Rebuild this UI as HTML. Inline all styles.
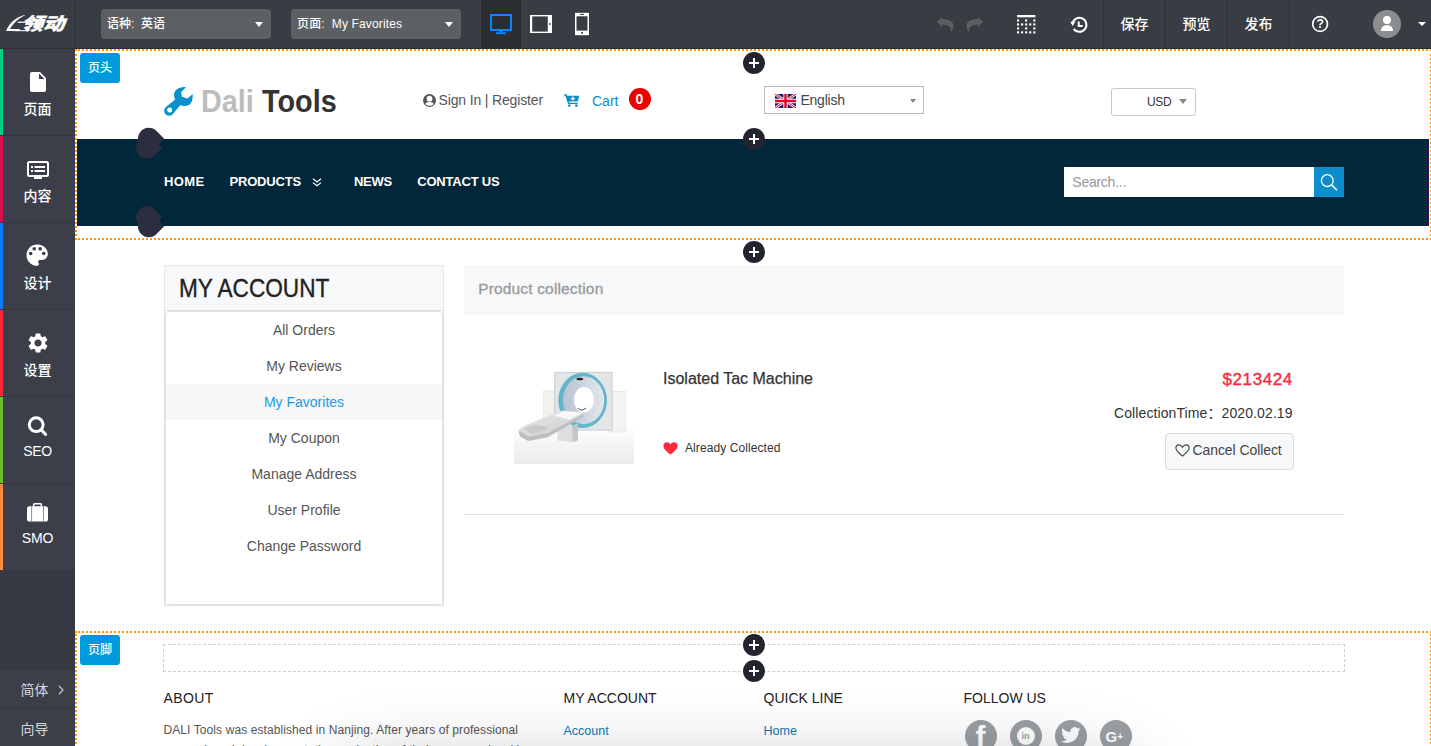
<!DOCTYPE html>
<html lang="zh-CN">
<head>
<meta charset="utf-8">
<title>My Favorites - Dali Tools</title>
<style>
*{box-sizing:border-box;margin:0;padding:0}
html,body{width:1431px;height:746px;overflow:hidden;background:#fff}
body{font-family:"Liberation Sans","Noto Sans CJK SC",sans-serif;font-size:14px;color:#333;position:relative}
.abs{position:absolute}
.t{position:absolute;white-space:nowrap;line-height:1}
svg{display:block;position:absolute;overflow:visible}

/* ---------- top bar ---------- */
#topbar{position:absolute;left:0;top:0;width:1431px;height:49px;background:#383c43;border-bottom:1px solid #2b2e33}
#topbar .vd{position:absolute;top:0;width:1px;height:48px;background:#2c2f34}
.sel{position:absolute;top:9px;width:170px;height:30px;background:#5c6063;border-radius:4px;color:#fff;font-size:12px}
.sel .t{left:6px;top:9px;font-size:12px;color:#fff;font-weight:500}
.caret{position:absolute;width:0;height:0;border-left:4.5px solid transparent;border-right:4.5px solid transparent;border-top:5px solid #fff}
.tbtn{position:absolute;top:0;height:48px;color:#fff;font-size:14px;font-weight:500;line-height:48px;text-align:center}

/* ---------- side bar ---------- */
#side{position:absolute;left:0;top:49px;width:75px;height:697px;background:#3c3f4a}
.si{position:absolute;left:0;width:75px;height:87px;border-bottom:1px solid #343741}
.si i{position:absolute;left:0;top:0;width:3px;height:86px}
.si svg,.si .lb{margin-top:-1px}
.si .lb{position:absolute;left:0;width:75px;text-align:center;color:#fff;font-size:14px;font-weight:500;line-height:16px;top:53px}
.si .lb.en{font-size:14px;font-weight:400;top:54px}

/* ---------- editor canvas ---------- */
.badge{position:absolute;width:40px;height:30px;background:#0099dd;border-radius:3px;color:#fff;font-size:12px;line-height:30px;text-align:center;font-weight:500}
.plus{position:absolute;width:22px;height:22px;border-radius:50%;background:#22242f}
.plus:before{content:"";position:absolute;left:6px;top:10px;width:10px;height:2px;background:#fff}
.plus:after{content:"";position:absolute;left:10px;top:6px;width:2px;height:10px;background:#fff}
.dotc{position:absolute;width:2px;height:2px;background:#ff9800}
.doth{position:absolute;height:2px;background:repeating-linear-gradient(90deg,#ff9800 0 2px,transparent 2px 4px)}
.dotv{position:absolute;width:2px;background:repeating-linear-gradient(180deg,#ff9800 0 2px,transparent 2px 4px)}

/* ---------- site ---------- */
#canvas{position:absolute;left:75px;top:49px;width:1356px;height:697px;background:#fff;overflow:hidden}
#canvas .in{position:absolute;left:-75px;top:-49px;width:1431px;height:746px} /* page coordinates */
.nav{position:absolute;left:77px;top:139px;width:1352px;height:87px;background:#02273a}
.nv{color:#fff;font-size:13px;font-weight:700;top:175px}
.c5{color:#555}

.mi{position:absolute;left:166px;width:276px;height:36px;line-height:36px;text-align:center;font-size:14px;color:#555}
.ft-h{font-size:14px;color:#222;top:691px}
.ft-l{font-size:12.5px;color:#0b7ab8}
.soc{top:720px;width:32px;height:32px;border-radius:50%;background:#9a9fa4}
</style>
</head>
<body>

<!-- ================= TOP BAR ================= -->
<div id="topbar">
  <!-- logo -->
  <svg width="75" height="48" viewBox="0 0 75 48" style="left:0;top:0">
    <path d="M6 31 C10 22 17 16 26 15 C18 18 13 24 10 29 L20 29 L19 31 Z" fill="#fff"/>
    <path d="M18 21.5 h13 l-.5 1.5 h-13z M15 30 h14 l-.4 1.2 h-14z" fill="#fff" opacity=".85"/>
    <text x="22" y="29.8" font-family="'Liberation Sans','Noto Sans CJK SC',sans-serif" font-size="17.5" font-weight="900" fill="#fff" stroke="#fff" stroke-width=".4" transform="translate(10 0) skewX(-20)" textLength="43" lengthAdjust="spacingAndGlyphs">领动</text>
  </svg>
  <div class="vd" style="left:75px"></div>

  <div class="sel" style="left:101px"><span class="t">语种:&nbsp; 英语</span><span class="caret" style="left:154px;top:13px"></span></div>
  <div class="sel" style="left:291px"><span class="t" style="letter-spacing:.15px">页面:&nbsp; My Favorites</span><span class="caret" style="left:154px;top:13px"></span></div>

  <!-- device icons -->
  <div class="abs" style="left:481px;top:0;width:40px;height:48px;background:#2a2e31"></div>
  <svg width="24" height="24" viewBox="0 0 24 24" style="left:489px;top:12px">
    <rect x="2" y="3" width="20" height="15" fill="none" stroke="#0a84ff" stroke-width="2"/>
    <rect x="10.5" y="19" width="3" height="2" fill="#0a84ff"/><rect x="7" y="20.3" width="10" height="1.9" fill="#0a84ff"/>
  </svg>
  <svg width="24" height="20" viewBox="0 0 24 20" style="left:529px;top:14px">
    <rect x="1" y="1" width="22" height="18" fill="#fff"/><rect x="3.2" y="2.4" width="15.6" height="15.2" fill="#383c43"/><rect x="20" y="9.2" width="1.6" height="1.6" fill="#383c43"/>
  </svg>
  <svg width="16" height="24" viewBox="0 0 16 24" style="left:574px;top:12px">
    <rect x="1" y="0.8" width="14" height="22.4" fill="#fff"/><rect x="2.5" y="4.3" width="11" height="14.3" fill="#383c43"/><rect x="6" y="1.9" width="4" height="1" fill="#383c43"/><rect x="7.2" y="20" width="1.7" height="1.7" fill="#383c43"/>
  </svg>

  <!-- undo / redo -->
  <svg width="75" height="34" viewBox="0 0 1431 649" style="left:925px;top:8px" fill="#5e5f60">
    <path id="undoP" d="M225 265 L330 165 L330 215 C430 215 542 240 542 340 C542 380 527 420 512 442 L495 442 C497 380 470 315 330 315 L330 365 Z"/>
    <path d="M225 265 L330 165 L330 215 C430 215 542 240 542 340 C542 380 527 420 512 442 L495 442 C497 380 470 315 330 315 L330 365 Z" transform="translate(1335 0) scale(-1 1)"/>
  </svg>

  <!-- grid icon -->
  <svg width="19" height="19" viewBox="0 0 19 19" style="left:1016.8px;top:14.6px" fill="#fff">
    <rect x="0" y="0" width="18.4" height="2.3"/><rect x="0" y="4.4" width="2.1" height="2.1"/><rect x="8.14" y="4.4" width="2.1" height="2.1"/><rect x="16.3" y="4.4" width="2.1" height="2.1"/><rect x="0" y="8.4" width="2.1" height="2.1"/><rect x="4.07" y="8.4" width="2.1" height="2.1"/><rect x="8.14" y="8.4" width="2.1" height="2.1"/><rect x="12.2" y="8.4" width="2.1" height="2.1"/><rect x="16.3" y="8.4" width="2.1" height="2.1"/><rect x="0" y="12.4" width="2.1" height="2.1"/><rect x="8.14" y="12.4" width="2.1" height="2.1"/><rect x="16.3" y="12.4" width="2.1" height="2.1"/><rect x="0" y="16.3" width="2.1" height="2.1"/><rect x="4.07" y="16.3" width="2.1" height="2.1"/><rect x="8.14" y="16.3" width="2.1" height="2.1"/><rect x="12.2" y="16.3" width="2.1" height="2.1"/><rect x="16.3" y="16.3" width="2.1" height="2.1"/>
  </svg>

  <!-- history icon -->
  <svg width="22" height="22" viewBox="0 0 22 22" style="left:1068px;top:14px" fill="#fff">
    <path d="M4.4 10.2 A7 7 0 1 1 5.7 14.9" fill="none" stroke="#fff" stroke-width="2"/>
    <path d="M2.3 7.7 H7.5 L4.7 12z"/>
    <path d="M9.7 7.6 h2 v3.3 h3 v2 h-5z"/>
  </svg>

  <div class="vd" style="left:1103px"></div>
  <div class="tbtn" style="left:1104px;width:61px">保存</div>
  <div class="vd" style="left:1165px"></div>
  <div class="tbtn" style="left:1166px;width:61px">预览</div>
  <div class="vd" style="left:1227px"></div>
  <div class="tbtn" style="left:1228px;width:61px">发布</div>
  <div class="vd" style="left:1289px"></div>

  <!-- help -->
  <svg width="20" height="20" viewBox="0 0 20 20" style="left:1310px;top:14px"><circle cx="10.1" cy="10" r="7.4" fill="none" stroke="#fff" stroke-width="1.7"/></svg>
  <span class="t" style="left:1316.6px;top:18.3px;font-size:12px;font-weight:700;color:#fff">?</span>

  <!-- avatar -->
  <div class="abs" style="left:1373px;top:10px;width:28px;height:28px;border-radius:50%;background:#8b8e90;overflow:hidden">
    <div class="abs" style="left:10px;top:6px;width:8px;height:8px;border-radius:50%;background:#fff"></div>
    <div class="abs" style="left:7.7px;top:15.3px;width:12.6px;height:5.4px;border-radius:6.3px 6.3px 0 0/5.4px 5.4px 0 0;background:#fff"></div>
  </div>
  <span class="caret" style="left:1418px;top:22px;border-left-width:4px;border-right-width:4px;border-top-width:4.5px"></span>
</div>

<!-- ================= SIDE BAR ================= -->
<div id="side">
  <!-- coordinates inside #side are page-y minus 49 -->
  <div class="si" style="top:0px"><i style="background:#00d084"></i>
    <svg width="24" height="24" viewBox="0 0 24 24" style="left:26px;top:22px"><path fill="#fff" d="M6 2c-1.1 0-1.99.9-1.99 2L4 20c0 1.1.89 2 1.99 2H18c1.1 0 2-.9 2-2V8l-6-6H6zm7 7V3.5L18.5 9H13z"/></svg>
    <div class="lb">页面</div></div>
  <div class="si" style="top:87px"><i style="background:#d6104f"></i>
    <svg width="24" height="20" viewBox="0 0 24 20" style="left:26px;top:25px">
      <rect x="2" y="2" width="20" height="14" rx="1.5" fill="none" stroke="#fff" stroke-width="2"/><rect x="8" y="16.5" width="8" height="2.5" fill="#fff"/>
      <rect x="5" y="6" width="2" height="2" fill="#fff"/><rect x="8.5" y="6" width="10.5" height="2" fill="#fff"/>
      <rect x="5" y="10" width="2" height="2" fill="#fff"/><rect x="8.5" y="10" width="10.5" height="2" fill="#fff"/>
    </svg>
    <div class="lb">内容</div></div>
  <div class="si" style="top:174px"><i style="background:#0a7cf5"></i>
    <svg width="28.4" height="28.4" viewBox="0 0 24 24" style="left:23.4px;top:19.2px"><path fill="#fff" d="M12 3c-4.97 0-9 4.03-9 9s4.03 9 9 9c.83 0 1.5-.67 1.5-1.5 0-.39-.15-.74-.39-1.01-.23-.26-.38-.61-.38-.99 0-.83.67-1.5 1.5-1.5H16c2.76 0 5-2.24 5-5 0-4.42-4.03-8-9-8zm-5.5 9c-.83 0-1.5-.67-1.5-1.5S5.67 9 6.5 9 8 9.67 8 10.5 7.33 12 6.5 12zm3-4C8.67 8 8 7.33 8 6.5S8.67 5 9.5 5s1.5.67 1.5 1.5S10.33 8 9.5 8zm5 0c-.83 0-1.5-.67-1.5-1.5S13.67 5 14.5 5s1.5.67 1.5 1.5S15.33 8 14.5 8zm3 4c-.83 0-1.5-.67-1.5-1.5S16.67 9 17.5 9s1.5.67 1.5 1.5-.67 1.5-1.5 1.5z"/></svg>
    <div class="lb">设计</div></div>
  <div class="si" style="top:261px"><i style="background:#f5283c"></i>
    <svg width="24" height="24" viewBox="0 0 24 24" style="left:26px;top:22px"><path fill="#fff" d="M19.14 12.94c.04-.3.06-.61.06-.94 0-.32-.02-.64-.07-.94l2.03-1.58c.18-.14.23-.41.12-.61l-1.92-3.32c-.12-.22-.37-.29-.59-.22l-2.39.96c-.5-.38-1.03-.7-1.62-.94l-.36-2.54c-.04-.24-.24-.41-.48-.41h-3.84c-.24 0-.43.17-.47.41l-.36 2.54c-.59.24-1.13.57-1.62.94l-2.39-.96c-.22-.08-.47 0-.59.22L2.74 8.87c-.12.21-.08.47.12.61l2.03 1.58c-.05.3-.09.63-.09.94s.02.64.07.94l-2.03 1.58c-.18.14-.23.41-.12.61l1.92 3.32c.12.22.37.29.59.22l2.39-.96c.5.38 1.03.7 1.62.94l.36 2.54c.05.24.24.41.48.41h3.84c.24 0 .44-.17.47-.41l.36-2.54c.59-.24 1.13-.56 1.62-.94l2.39.96c.22.08.47 0 .59-.22l1.92-3.32c.12-.22.07-.47-.12-.61l-2.01-1.58zM12 15.6c-1.98 0-3.6-1.62-3.6-3.6s1.62-3.6 3.6-3.6 3.6 1.62 3.6 3.6-1.62 3.6-3.6 3.6z"/></svg>
    <div class="lb">设置</div></div>
  <div class="si" style="top:348px"><i style="background:#6cc02c"></i>
    <svg width="24" height="24" viewBox="0 0 24 24" style="left:26px;top:19px"><circle cx="10.2" cy="9.7" r="6.9" fill="none" stroke="#fff" stroke-width="3"/><path d="M15.4 15 L19.6 19.4" stroke="#fff" stroke-width="3" stroke-linecap="round"/></svg>
    <div class="lb en" style="top:47px;letter-spacing:-.3px">SEO</div></div>
  <div class="si" style="top:435px"><i style="background:#ff8a3c"></i>
    <svg width="24" height="22" viewBox="0 0 24 22" style="left:26px;top:18px">
      <rect x="1" y="5.3" width="21" height="15.3" rx="2.6" fill="#fff"/>
      <rect x="5.1" y="5.3" width="1" height="15.3" fill="#8b8e96"/><rect x="17" y="5.3" width="1" height="15.3" fill="#8b8e96"/>
      <path d="M7.7 5.3 V3.6 a0.8 0.8 0 0 1 .8 -.8 h6 a0.8 0.8 0 0 1 .8 .8 V5.3" fill="none" stroke="#fff" stroke-width="1.6"/>
    </svg>
    <div class="lb en" style="top:47px;letter-spacing:-.2px">SMO</div></div>
  <div class="abs" style="left:0;top:521px;width:75px;height:100px;background:#363944"></div>
  <div class="abs" style="left:0;top:621px;width:75px;height:39px;border-bottom:1px solid #343741"></div>
  <span class="t" style="left:20.5px;top:632.5px;font-size:14px;line-height:16px;color:#d6d7d9">简体</span>
  <svg width="6" height="10" viewBox="0 0 6 10" style="left:57.5px;top:635.5px"><path d="M1 1 L5 5 L1 9" fill="none" stroke="#c8c9cc" stroke-width="1.2"/></svg>
  <span class="t" style="left:20.5px;top:671.5px;font-size:14px;line-height:16px;color:#d6d7d9">向导</span>
</div>

<!-- ================= CANVAS ================= -->
<div id="canvas"><div class="in">
  <!-- editor frame : header -->
  <div class="dotc" style="left:75px;top:49px"></div><div class="dotc" style="left:75px;top:238px"></div>
  <div class="doth" style="left:78px;top:49px;width:1353px"></div>
  <div class="doth" style="left:78px;top:238px;width:1353px"></div>
  <div class="dotv" style="left:75px;top:54px;height:184px"></div>
  <div class="dotv" style="left:1430px;top:54px;height:184px"></div>

  <!-- site header -->
  <svg width="40" height="38" viewBox="0 0 785 746" style="left:160px;top:82px"><path fill="#0992cb" fill-rule="evenodd" d="M510 100 C440 95 330 120 290 190 C265 240 270 300 300 345 L120 488 A98 98 0 1 0 262 618 L400 450 C440 480 520 480 570 450 C620 420 650 340 640 235 L540 325 L430 290 L415 200 Z M190 500 a50 50 0 1 0 .1 0z"/></svg>
  <span class="t" id="logoA" style="left:201px;top:84.5px;font-size:32px;font-weight:700;color:#bdbdbd;transform-origin:0 0;transform:scaleX(.9)">Dali</span>
  <span class="t" id="logoB" style="left:261.5px;top:84.5px;font-size:32px;font-weight:700;color:#333;transform-origin:0 0;transform:scaleX(.9)">Tools</span>

  <svg width="13" height="13" viewBox="0 0 13 13" style="left:422.5px;top:93.8px"><defs><clipPath id="uc"><circle cx="6.5" cy="6.5" r="5.2"/></clipPath></defs><circle cx="6.5" cy="6.5" r="6.5" fill="#555"/><circle cx="6.5" cy="4.7" r="2.9" fill="#fff"/><ellipse cx="6.5" cy="10.8" rx="4.3" ry="2.8" fill="#fff" clip-path="url(#uc)"/></svg>
  <span class="t c5" id="sign" style="left:438.5px;top:93px;font-size:14px;letter-spacing:-.15px">Sign In | Register</span>
  <svg width="16" height="13" viewBox="0 0 16 13" style="left:563.5px;top:94px" fill="#0b8ecb">
    <path d="M0 0.2 h2.6 l.7 1.6 h12 l-1.6 5.8 h-9 l.4 1.1 h8.6 v1.3 h-9.6 l-2.8 -8.5 h-1.3z"/>
    <circle cx="5.3" cy="11.6" r="1.3"/><circle cx="12.3" cy="11.6" r="1.3"/>
    <path d="M8.2 2.6 h1.3 v1.4 h1.5 v1.2 h-1.5 v1.4 h-1.3 v-1.4 h-1.5 v-1.2 h1.5z" fill="#fff"/>
  </svg>
  <span class="t" id="cart" style="left:592px;top:93.5px;font-size:14px;color:#0b8ecb">Cart</span>
  <div class="abs" style="left:629px;top:88px;width:22px;height:22px;border-radius:50%;background:#ec0000"></div>
  <span class="t" style="left:635.6px;top:91.5px;font-size:14px;font-weight:700;color:#fff">0</span>

  <div class="abs" style="left:764px;top:86px;width:160px;height:28px;border:1px solid #bcbcbc;background:#fff"></div>
  <svg width="21" height="14" viewBox="0 0 60 36" style="left:775px;top:94px;overflow:hidden" preserveAspectRatio="none">
    <rect width="60" height="36" fill="#1b1f73"/>
    <path d="M0 0 L60 36 M60 0 L0 36" stroke="#fff" stroke-width="7"/>
    <path d="M0 0 L60 36 M60 0 L0 36" stroke="#e4002b" stroke-width="2.6"/>
    <path d="M30 0 V36 M0 18 H60" stroke="#fff" stroke-width="12"/>
    <path d="M30 0 V36 M0 18 H60" stroke="#e4002b" stroke-width="7"/>
  </svg>
  <span class="t c5" id="eng" style="left:800.5px;top:93px;font-size:14px;color:#444;letter-spacing:-.25px">English</span>
  <span class="caret" style="left:909.5px;top:98.5px;border-left-width:3.5px;border-right-width:3.5px;border-top:4px solid #888"></span>

  <div class="abs" style="left:1111px;top:88px;width:85px;height:28px;border:1px solid #c8c8c8;border-radius:3px;background:#fff"></div>
  <span class="t" id="usd" style="left:1147px;top:95.5px;font-size:12px;color:#333;letter-spacing:-.3px">USD</span>
  <span class="caret" style="left:1178.5px;top:99px;border-left-width:4.5px;border-right-width:4.5px;border-top:5px solid #888"></span>

  <!-- nav -->
  <div class="nav"></div>
  <span class="t nv" id="n1" style="left:164px;letter-spacing:.35px">HOME</span>
  <span class="t nv" id="n2" style="left:229.5px;letter-spacing:-.2px">PRODUCTS</span>
  <svg width="10" height="9" viewBox="0 0 10 9" style="left:312.3px;top:178.3px"><path d="M1 0.8 L5 4 L9 0.8 M1 4.6 L5 7.8 L9 4.6" fill="none" stroke="#fff" stroke-width="1.2"/></svg>
  <span class="t nv" id="n3" style="left:354px;letter-spacing:-.3px">NEWS</span>
  <span class="t nv" id="n4" style="left:417.2px;letter-spacing:-.2px">CONTACT US</span>
  <div class="abs" style="left:1064px;top:167px;width:250px;height:30px;background:#fff"></div>
  <span class="t" id="srch" style="left:1072.3px;top:174.5px;font-size:14px;color:#999;letter-spacing:-.25px">Search...</span>
  <div class="abs" style="left:1314px;top:167px;width:30px;height:30px;background:#0b8ecb"></div>
  <svg width="20" height="20" viewBox="0 0 20 20" style="left:1319px;top:172px"><circle cx="8.3" cy="8.6" r="5.9" fill="none" stroke="#fff" stroke-width="1.3"/><path d="M12.6 12.9 L17.5 17.8" stroke="#fff" stroke-width="1.5" stroke-linecap="round"/></svg>

  <!-- drag handles (teardrops) -->
  <svg width="32" height="34" viewBox="0 0 32 34" style="left:134px;top:126px" fill="#2b2d40">
    <path d="M14.8 1.8 a10.9 10.9 0 0 1 7.7 3.2 L30.2 12.7 L22.5 20.4 a10.9 10.9 0 1 1 -7.7 -18.6z"/>
    <path d="M13 10.9 a10.9 10.9 0 0 1 7.7 3.2 L28.4 21.8 L20.7 29.5 a10.9 10.9 0 1 1 -7.7 -18.6z"/>
  </svg>
  <svg width="32" height="34" viewBox="0 0 32 34" style="left:134px;top:205px" fill="#2b2d40"><g transform="translate(0 34) scale(1 -1)">
    <path d="M14.8 1.8 a10.9 10.9 0 0 1 7.7 3.2 L30.2 12.7 L22.5 20.4 a10.9 10.9 0 1 1 -7.7 -18.6z"/>
    <path d="M13 10.9 a10.9 10.9 0 0 1 7.7 3.2 L28.4 21.8 L20.7 29.5 a10.9 10.9 0 1 1 -7.7 -18.6z"/></g>
  </svg>


  <!-- ===== main : left menu ===== -->
  <div class="abs" style="left:164px;top:265px;width:280px;height:46px;background:#f7f8fa;border:1px solid #e6e7e9"></div>
  <span class="t" id="myacc" style="left:179px;top:275.5px;font-size:25px;color:#222;-webkit-text-stroke:.35px #222;transform-origin:0 0;transform:scaleX(.904)">MY ACCOUNT</span>
  <div class="abs" style="left:164px;top:310px;width:280px;height:296px;background:#fff;border:1px solid #dedede"></div>
  <div class="abs" style="left:165px;top:311px;width:278px;height:294px;border:1px solid #e3e3e3;border-radius:4px"></div>
  <div class="mi" style="top:312px"><span id="m1">All Orders</span></div>
  <div class="mi" style="top:348px"><span id="m2">My Reviews</span></div>
  <div class="mi" style="top:384px;background:#f7f7f7;color:#1a9be6"><span id="m3">My Favorites</span></div>
  <div class="mi" style="top:420px"><span id="m4">My Coupon</span></div>
  <div class="mi" style="top:456px"><span id="m5">Manage Address</span></div>
  <div class="mi" style="top:492px"><span id="m6">User Profile</span></div>
  <div class="mi" style="top:528px"><span id="m7">Change Password</span></div>

  <!-- ===== main : product collection ===== -->
  <div class="abs" style="left:464px;top:265px;width:880px;height:50px;background:#f7f8fa"></div>
  <span class="t" id="pc" style="left:478.2px;top:281px;font-size:15.5px;color:#999;letter-spacing:.16px;-webkit-text-stroke:.3px #999">Product collection</span>

  <svg id="ct" width="120" height="120" viewBox="0 0 120 120" style="left:514px;top:344px">
    <defs>
      <linearGradient id="flo" x1="0" y1="0" x2="0" y2="1"><stop offset="0" stop-color="#ffffff"/><stop offset=".68" stop-color="#ffffff"/><stop offset=".82" stop-color="#f6f6f6"/><stop offset="1" stop-color="#eaeaea"/></linearGradient>
      <linearGradient id="tbl" x1="0" y1="0" x2="1" y2="1"><stop offset="0" stop-color="#e9e9e9"/><stop offset="1" stop-color="#cbcccd"/></linearGradient>
      <linearGradient id="cone" x1="0" y1="0" x2="1" y2="0"><stop offset="0" stop-color="#b9c2d0"/><stop offset=".6" stop-color="#d3d9e3"/><stop offset="1" stop-color="#e3e7ee"/></linearGradient>
    </defs>
    <rect width="120" height="120" fill="url(#flo)"/>
    <rect x="29.6" y="47" width="11.5" height="27.8" fill="#f0f2ee" stroke="#dcdfd9" stroke-width=".6"/>
    <rect x="94.9" y="47.6" width="16.5" height="40.4" fill="#f2f4f1" stroke="#dcdfd9" stroke-width=".6"/>
    <rect x="40.8" y="28.3" width="57.3" height="57.8" fill="#e3e5e8" stroke="#bfc3c8" stroke-width=".8"/>
    <ellipse cx="68.6" cy="56.4" rx="23.9" ry="27.2" fill="#62b6cb" stroke="#4fa3ba" stroke-width=".6"/>
    <ellipse cx="69.6" cy="56.2" rx="20.6" ry="24" fill="url(#cone)"/>
    <ellipse cx="69.9" cy="55.7" rx="10" ry="12.7" fill="#ffffff"/>
    <ellipse cx="65.8" cy="35" rx="3.4" ry="1.3" fill="#26282a"/>
    <path d="M64 64 q3 4 8 0" fill="none" stroke="#2d3033" stroke-width=".9"/>
    <polygon points="43.3,78.6 58.3,81.4 58.3,98.3 43.3,96.4" fill="#dcdedf"/>
    <polygon points="58.3,81.4 63.9,79.5 63.9,96.4 58.3,98.3" fill="#c4c6c8"/>
    <polygon points="4.8,86.1 14.2,92.1 33.9,88.4 69.5,69.6 69.5,72.6 33.9,93.2 14.2,97.0 6.3,92.7 4.8,88.9" fill="#bcbec0"/>
    <polygon points="4.8,86.1 9.5,82.0 47.9,66.6 69.5,68.5 69.5,70.0 33.9,88.9 14.2,92.7" fill="url(#tbl)"/>
    <polygon points="39.5,71.5 50.8,67.0 68.6,68.8 55.8,75.6" fill="#f8f8f8"/>
    <polygon points="9.5,84.2 18.9,80.9 33.9,82.7 32.0,86.1 17.0,89.9" fill="#c9cacb"/>
  </svg>

  <span class="t" id="ptitle" style="left:663px;top:371px;font-size:16px;color:#333;-webkit-text-stroke:.25px #333">Isolated Tac Machine</span>
  <svg width="15" height="13" viewBox="0 0 15 13" style="left:663px;top:441.5px"><path d="M7.5 12.5 C6 11 .4 7.5 .4 3.9 C.4 1.6 2 .3 3.9 .3 C5.4 .3 6.7 1.2 7.5 2.5 C8.3 1.2 9.6 .3 11.1 .3 C13 .3 14.6 1.6 14.6 3.9 C14.6 7.5 9 11 7.5 12.5z" fill="#fb2a3c"/></svg>
  <span class="t" id="already" style="left:685px;top:442px;font-size:12px;color:#333;letter-spacing:.08px">Already Collected</span>

  <span class="t" id="price" style="left:1222.5px;top:370.5px;font-size:17px;color:#fa2a3c;letter-spacing:.6px;-webkit-text-stroke:.4px #fa2a3c">$213424</span>
  <span class="t" id="ctime" style="left:1114px;top:404.5px;font-size:14px;color:#333;letter-spacing:.1px">CollectionTime<span style="font-family:'Noto Sans CJK SC',sans-serif">：</span>2020.02.19</span>
  <div class="abs" style="left:1165px;top:433px;width:129px;height:37px;border:1px solid #dcdcdc;border-radius:4px;background:#f7f8fa"></div>
  <svg width="15" height="13" viewBox="0 0 15 13" style="left:1174.5px;top:444px"><path d="M7.5 12 C6 10.6 .9 7.3 .9 4 C.9 2 2.3 .9 3.9 .9 C5.4 .9 6.7 1.9 7.5 3.3 C8.3 1.9 9.6 .9 11.1 .9 C12.7 .9 14.1 2 14.1 4 C14.1 7.3 9 10.6 7.5 12z" fill="none" stroke="#444" stroke-width="1.1"/></svg>
  <span class="t" id="cancel" style="left:1192.5px;top:443px;font-size:14px;color:#444;letter-spacing:-.08px">Cancel Collect</span>
  <div class="abs" style="left:464px;top:514px;width:880px;height:1px;background:#dddddd"></div>

  <!-- ===== footer ===== -->
  <div class="dotc" style="left:75px;top:631px"></div>
  <div class="doth" style="left:78px;top:631px;width:1353px"></div>
  <div class="dotv" style="left:75px;top:634px;height:112px"></div>
  <div class="dotv" style="left:1430px;top:634px;height:112px"></div>
  <div class="abs" style="left:163px;top:644px;width:1182px;height:28px;border:1px dashed #cfcfcf"></div>
  <div class="badge" style="left:80px;top:635px">页脚</div>
  <div class="plus" style="left:743px;top:634px"></div>
  <div class="plus" style="left:743px;top:660px"></div>

  <span class="t ft-h" id="f1" style="left:163.5px;letter-spacing:.4px">ABOUT</span>
  <span class="t ft-h" id="f2" style="left:563.5px">MY ACCOUNT</span>
  <span class="t ft-h" id="f3" style="left:763.5px">QUICK LINE</span>
  <span class="t ft-h" id="f4" style="left:963.5px">FOLLOW US</span>
  <span class="t" id="fp1" style="left:163.5px;top:723.5px;font-size:12px;color:#555;letter-spacing:.09px">DALI Tools was established in Nanjing. After years of professional</span>
  <span class="t" id="fp2" style="left:163.5px;top:744px;font-size:12px;color:#555;letter-spacing:.09px">research and development, the production of their own woodworking</span>
  <span class="t ft-l" id="fl1" style="left:563.5px;top:725px">Account</span>
  <span class="t ft-l" id="fl2" style="left:763.5px;top:725px">Home</span>
  <div class="abs soc" style="left:965px"></div>
  <div class="abs soc" style="left:1010px"></div>
  <div class="abs soc" style="left:1055px"></div>
  <div class="abs soc" style="left:1100px"></div>
  <span class="t" style="left:975.5px;top:721.5px;font-size:30px;font-weight:700;color:#fff">f</span>
  <div class="abs" style="left:1016.7px;top:726.7px;width:18.6px;height:18.6px;border-radius:50%;background:#fff"></div>
  <span class="t" style="left:1021.5px;top:731.5px;font-size:9px;font-weight:700;color:#9a9fa4">in</span>
  <svg width="20" height="16" viewBox="0 0 20 16" style="left:1061px;top:727px"><path d="M19.5 2 c-.7.3-1.5.5-2.3.6 .8-.5 1.4-1.3 1.7-2.2 -.8.5-1.6.8-2.5 1 A4 4 0 0 0 9.6 5 C6.3 4.9 3.4 3.3 1.4.9 c-1 1.8-.5 4.1 1.2 5.3 -.6 0-1.2-.2-1.8-.5 0 1.9 1.4 3.6 3.2 4 -.6.2-1.2.2-1.8.1 .5 1.6 2 2.7 3.7 2.8 -1.7 1.3-3.7 1.9-5.9 1.7 C1.8 15.4 3.9 16 6.1 16 c7.4 0 11.7-6.3 11.4-11.9 .8-.6 1.5-1.3 2-2.1z" fill="#fff"/></svg>
  <span class="t" style="left:1105.5px;top:728.5px;font-size:15px;font-weight:700;color:#fff">G<span style="font-size:10px;position:relative;top:-2px">+</span></span>
  <div class="abs" style="left:350px;top:790px;width:770px;height:60px;border-radius:30px;box-shadow:0 0 70px 30px rgba(0,0,0,.22)"></div>
  <div class="badge" style="left:80px;top:53px">页头</div>
  <div class="plus" style="left:743px;top:52px"></div>
  <div class="plus" style="left:743px;top:128px"></div>
  <div class="plus" style="left:743px;top:241px"></div>
</div></div>

</body>
</html>
